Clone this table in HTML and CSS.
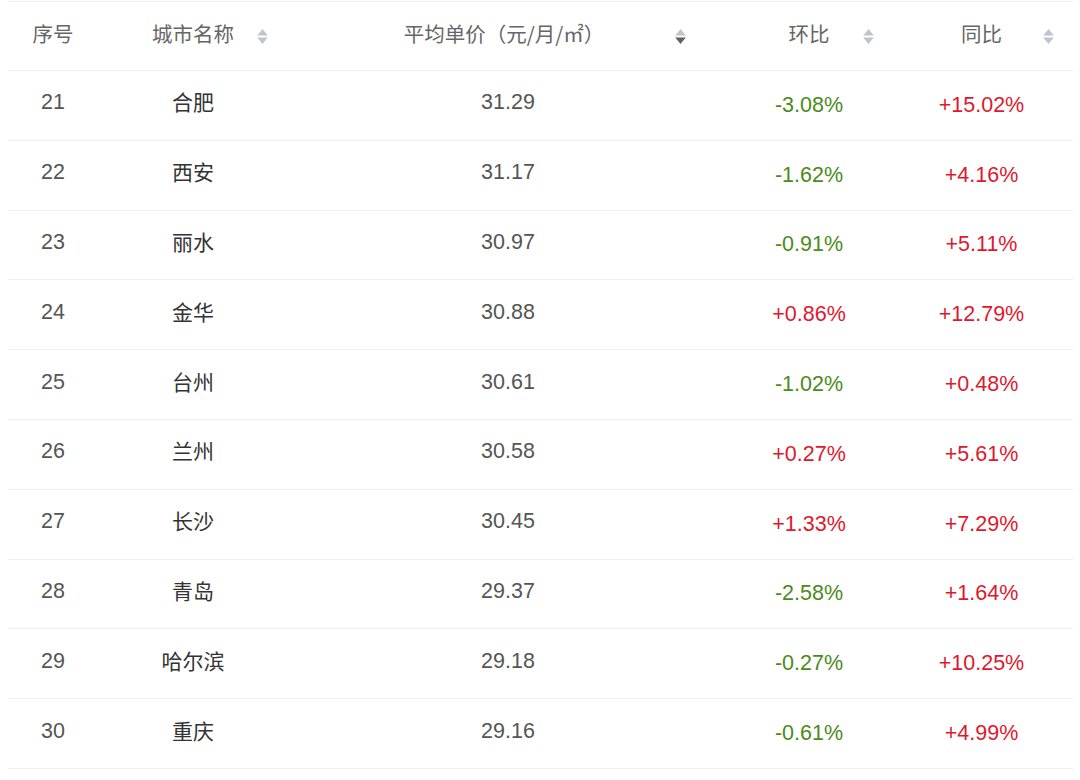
FILE: index.html
```html
<!DOCTYPE html>
<html lang="zh">
<head>
<meta charset="utf-8">
<link rel="stylesheet" href="styles.css">
</head>
<body>
<div class="table">
  <div class="row head">
    <div class="cell c1"><span class="htext">序号</span></div>
    <div class="cell c2 sortable"><span></span><span class="htext">城市名称</span><span class="sort"><svg width="11" height="17" viewBox="0 0 10 16"><path d="M5 1 L10 7 L0 7 Z" fill="#c0c4cc"/><path d="M5 15 L10 9 L0 9 Z" fill="#c0c4cc"/></svg></span></div>
    <div class="cell c3 sortable"><span></span><span class="htext">平均单价（元/月/㎡）</span><span class="sort"><svg width="11" height="17" viewBox="0 0 10 16"><path d="M5 1 L10 7 L0 7 Z" fill="#c0c4cc"/><path d="M5 15 L10 9 L0 9 Z" fill="#606266"/></svg></span></div>
    <div class="cell c4 sortable"><span></span><span class="htext">环比</span><span class="sort"><svg width="11" height="17" viewBox="0 0 10 16"><path d="M5 1 L10 7 L0 7 Z" fill="#c0c4cc"/><path d="M5 15 L10 9 L0 9 Z" fill="#c0c4cc"/></svg></span></div>
    <div class="cell c5 sortable"><span></span><span class="htext">同比</span><span class="sort"><svg width="11" height="17" viewBox="0 0 10 16"><path d="M5 1 L10 7 L0 7 Z" fill="#c0c4cc"/><path d="M5 15 L10 9 L0 9 Z" fill="#c0c4cc"/></svg></span></div>
  </div>
  <div class="row"><div class="cell c1 num">21</div><div class="cell c2 city">合肥</div><div class="cell c3 num">31.29</div><div class="cell c4 down">-3.08%</div><div class="cell c5 up">+15.02%</div></div>
  <div class="row"><div class="cell c1 num">22</div><div class="cell c2 city">西安</div><div class="cell c3 num">31.17</div><div class="cell c4 down">-1.62%</div><div class="cell c5 up">+4.16%</div></div>
  <div class="row"><div class="cell c1 num">23</div><div class="cell c2 city">丽水</div><div class="cell c3 num">30.97</div><div class="cell c4 down">-0.91%</div><div class="cell c5 up">+5.11%</div></div>
  <div class="row"><div class="cell c1 num">24</div><div class="cell c2 city">金华</div><div class="cell c3 num">30.88</div><div class="cell c4 up">+0.86%</div><div class="cell c5 up">+12.79%</div></div>
  <div class="row"><div class="cell c1 num">25</div><div class="cell c2 city">台州</div><div class="cell c3 num">30.61</div><div class="cell c4 down">-1.02%</div><div class="cell c5 up">+0.48%</div></div>
  <div class="row"><div class="cell c1 num">26</div><div class="cell c2 city">兰州</div><div class="cell c3 num">30.58</div><div class="cell c4 up">+0.27%</div><div class="cell c5 up">+5.61%</div></div>
  <div class="row"><div class="cell c1 num">27</div><div class="cell c2 city">长沙</div><div class="cell c3 num">30.45</div><div class="cell c4 up">+1.33%</div><div class="cell c5 up">+7.29%</div></div>
  <div class="row"><div class="cell c1 num">28</div><div class="cell c2 city">青岛</div><div class="cell c3 num">29.37</div><div class="cell c4 down">-2.58%</div><div class="cell c5 up">+1.64%</div></div>
  <div class="row"><div class="cell c1 num">29</div><div class="cell c2 city">哈尔滨</div><div class="cell c3 num">29.18</div><div class="cell c4 down">-0.27%</div><div class="cell c5 up">+10.25%</div></div>
  <div class="row"><div class="cell c1 num">30</div><div class="cell c2 city">重庆</div><div class="cell c3 num">29.16</div><div class="cell c4 down">-0.61%</div><div class="cell c5 up">+4.99%</div></div>
</div>
</body>
</html>
```
FILE: styles.css
```css
html, body {
  margin: 0;
  padding: 0;
  background: #ffffff;
}
body {
  font-family: "Liberation Sans", Arial, "Noto Sans CJK SC", sans-serif;
  padding: 1px 7px 0 8px;
}
.table {
  border-top: 1px solid #ebeef5;
}
.row {
  display: grid;
  grid-template-columns: 90px 190px 440px 162px 183px;
  height: 68.8px;
  border-bottom: 1px solid #ebeef5;
}
.row.head {
  height: 68px;
}
.cell {
  display: flex;
  align-items: center;
  justify-content: center;
  font-size: 21.5px;
  color: #555555;
}
.head .cell {
  color: #666666;
  font-family: "Noto Sans CJK SC", sans-serif;
  font-size: 20.5px;
}
.htext {
  padding-bottom: 6px;
}
.sortable {
  display: grid;
  grid-template-columns: 1fr auto 1fr;
  align-items: center;
}
.sort {
  justify-self: end;
  display: flex;
  align-items: center;
}
.c2 .sort { padding-right: 20px; }
.c3 .sort { padding-right: 42px; }
.c4 .sort { padding-right: 16px; }
.c5 .sort { padding-right: 19px; }
.c3 .htext { margin-right: 8px; }
.city {
  font-family: "Noto Sans CJK SC", sans-serif;
  color: #333333;
  font-size: 21px;
  padding-bottom: 8px;
}
.num {
  padding-bottom: 5px;
}
.down {
  color: #4b8a1b;
}
.up {
  color: #e0182d;
}
```
